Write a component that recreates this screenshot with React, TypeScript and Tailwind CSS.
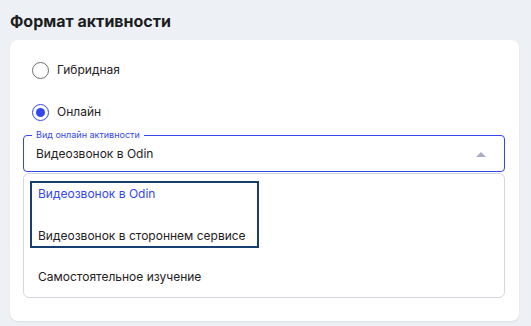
import { useState } from "react";

const options = [
  "Видеозвонок в Odin",
  "Видеозвонок в стороннем сервисе",
  "Самостоятельное изучение",
];

function Radio({ checked, label }: { checked: boolean; label: string }) {
  return (
    <label className="flex h-[42px] items-center gap-[8px]">
      <span
        className={
          checked
            ? "flex h-[17px] w-[17px] items-center justify-center rounded-full border-[1.5px] border-[#3347ef]"
            : "flex h-[17px] w-[17px] items-center justify-center rounded-full border-[1.5px] border-[#6f6f73]"
        }
      >
        {checked && <span className="h-[9px] w-[9px] rounded-full bg-[#3347ef]" />}
      </span>
      <span className="text-[12px] text-[#1f2023]">{label}</span>
    </label>
  );
}

export default function App() {
  const [value] = useState(options[0]);

  return (
    <div
      className="min-h-[326px] bg-[#edf1f5] pl-[10px] pr-[12px] pt-[11px] pb-[7px]"
      style={{ fontFamily: "Inter, 'Noto Sans', sans-serif" }}
    >
      <h2 className="h-[29px] text-[16px] font-bold leading-[20px] text-[#1c1d21]">
        Формат активности
      </h2>

      <div className="rounded-[8px] bg-white pl-[13px] pr-[14px] pt-[9px] pb-[23px] shadow-[0_1px_2px_rgba(0,0,0,0.08)]">
        <div className="pl-[9px]">
          <Radio checked={false} label="Гибридная" />
          <Radio checked label="Онлайн" />
        </div>

        <fieldset className="mt-[-3px] rounded-[4px] border border-[#3347ef] px-[8px]">
          <legend className="px-[4px] text-[9px] leading-[10px] text-[#3347ef]">
            Вид онлайн активности
          </legend>
          <div className="flex h-[31px] items-center justify-between pb-[3px] pl-[4px] pr-[10px]">
            <span className="text-[12px] text-[#1f2023]">{value}</span>
            <span className="h-0 w-0 border-x-[5px] border-b-[5px] border-x-transparent border-b-[#a9adc2]" />
          </div>
        </fieldset>

        <div className="relative mt-px rounded-[6px] border border-[#d3d8de] bg-white">
          {options.map((o, i) => (
            <div
              key={o}
              className={
                i === 0
                  ? "flex h-[41px] items-center pl-[14px] pb-[2px] text-[12px] text-[#3347ef]"
                  : "flex h-[41px] items-center pl-[14px] text-[12px] text-[#1f2023]"
              }
            >
              {o}
            </div>
          ))}
          <div className="pointer-events-none absolute left-[6px] top-[7px] h-[67px] w-[229px] border-2 border-[#173f6e]" />
        </div>
      </div>
    </div>
  );
}
